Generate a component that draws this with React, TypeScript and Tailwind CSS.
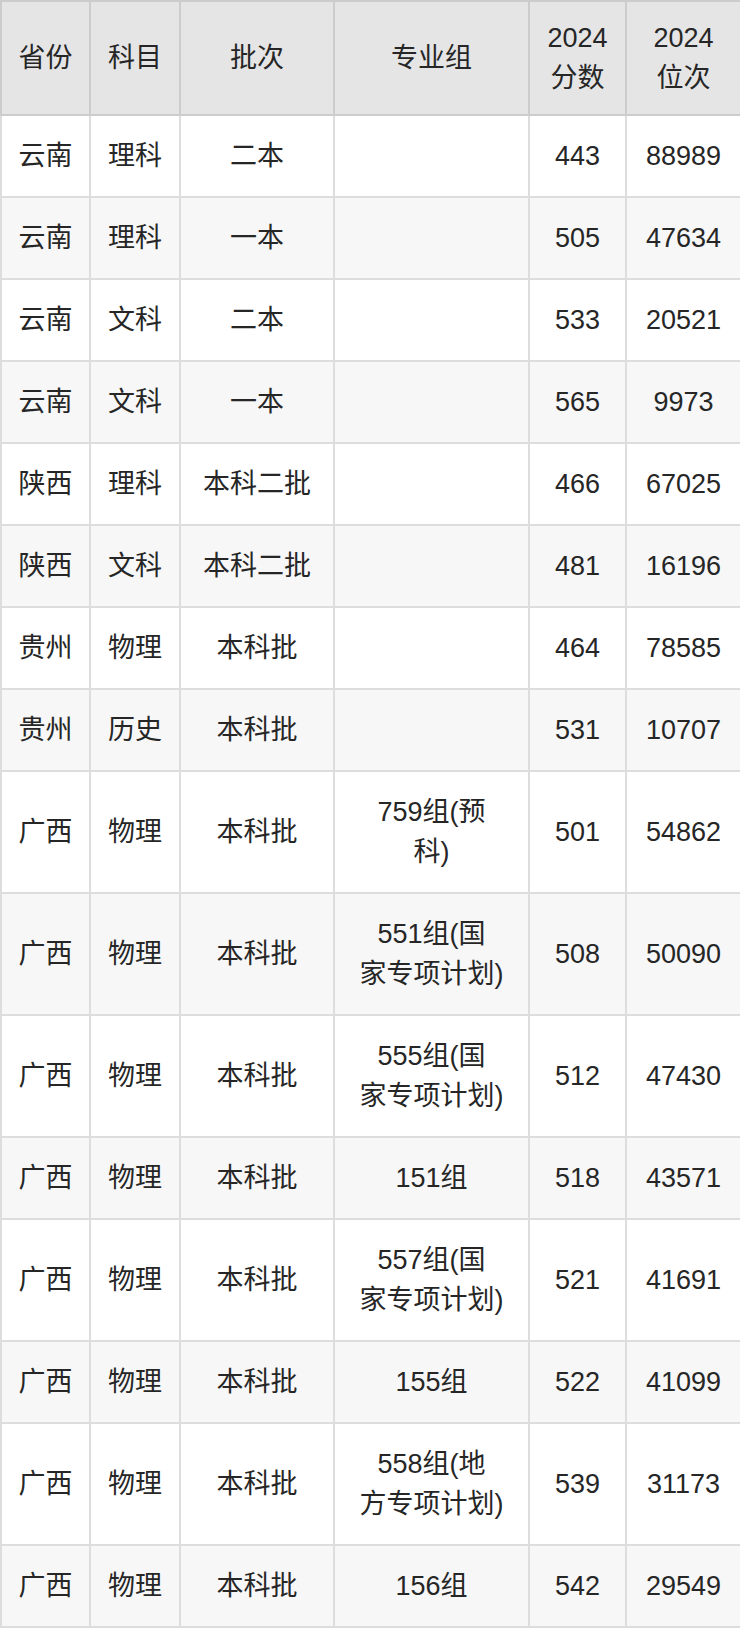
import React from "react";

type Row = {
  province: string;
  subject: string;
  batch: string;
  group: string[]; // lines, broken as in the source table
  score: string;
  rank: string;
};

const rows: Row[] = [
  { province: "云南", subject: "理科", batch: "二本", group: [], score: "443", rank: "88989" },
  { province: "云南", subject: "理科", batch: "一本", group: [], score: "505", rank: "47634" },
  { province: "云南", subject: "文科", batch: "二本", group: [], score: "533", rank: "20521" },
  { province: "云南", subject: "文科", batch: "一本", group: [], score: "565", rank: "9973" },
  { province: "陕西", subject: "理科", batch: "本科二批", group: [], score: "466", rank: "67025" },
  { province: "陕西", subject: "文科", batch: "本科二批", group: [], score: "481", rank: "16196" },
  { province: "贵州", subject: "物理", batch: "本科批", group: [], score: "464", rank: "78585" },
  { province: "贵州", subject: "历史", batch: "本科批", group: [], score: "531", rank: "10707" },
  { province: "广西", subject: "物理", batch: "本科批", group: ["759组(预", "科)"], score: "501", rank: "54862" },
  { province: "广西", subject: "物理", batch: "本科批", group: ["551组(国", "家专项计划)"], score: "508", rank: "50090" },
  { province: "广西", subject: "物理", batch: "本科批", group: ["555组(国", "家专项计划)"], score: "512", rank: "47430" },
  { province: "广西", subject: "物理", batch: "本科批", group: ["151组"], score: "518", rank: "43571" },
  { province: "广西", subject: "物理", batch: "本科批", group: ["557组(国", "家专项计划)"], score: "521", rank: "41691" },
  { province: "广西", subject: "物理", batch: "本科批", group: ["155组"], score: "522", rank: "41099" },
  { province: "广西", subject: "物理", batch: "本科批", group: ["558组(地", "方专项计划)"], score: "539", rank: "31173" },
  { province: "广西", subject: "物理", batch: "本科批", group: ["156组"], score: "542", rank: "29549" },
];

const th = "border-2 border-[#cccccc] px-[4px] py-[16px] text-center align-middle font-normal";
const td = "border-2 border-[#dddddd] px-[4px] py-[20px] text-center align-middle whitespace-nowrap";

export default function App() {
  return (
    <div
      className="w-[740px] bg-white text-[27px] leading-[40px] text-[#262626]"
      style={{ fontFamily: '"Liberation Sans", "Noto Sans CJK SC", sans-serif' }}
    >
      <table className="w-[740px] table-fixed border-collapse">
        <colgroup>
          <col className="w-[89px]" />
          <col className="w-[90px]" />
          <col className="w-[154px]" />
          <col className="w-[195px]" />
          <col className="w-[97px]" />
          <col className="w-[115px]" />
        </colgroup>
        <thead className="bg-[#e5e5e5]">
          <tr>
            <th className={th}>省份</th>
            <th className={th}>科目</th>
            <th className={th}>批次</th>
            <th className={th}>专业组</th>
            <th className={th}>
              2024
              <br />
              分数
            </th>
            <th className={th}>
              2024
              <br />
              位次
            </th>
          </tr>
        </thead>
        <tbody>
          {rows.map((r, i) => (
            <tr key={i} className={i % 2 === 1 ? "bg-[#f7f7f7]" : "bg-white"}>
              <td className={td}>{r.province}</td>
              <td className={td}>{r.subject}</td>
              <td className={td}>{r.batch}</td>
              <td className={td}>
                {r.group.map((line, j) => (
                  <div key={j}>{line}</div>
                ))}
              </td>
              <td className={td}>{r.score}</td>
              <td className={td}>{r.rank}</td>
            </tr>
          ))}
        </tbody>
      </table>
    </div>
  );
}
